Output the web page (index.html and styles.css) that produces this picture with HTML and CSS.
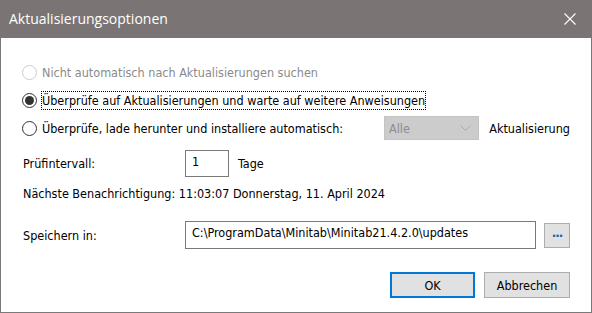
FILE: index.html
```html
<!DOCTYPE html>
<html lang="de">
<head>
<meta charset="utf-8">
<link rel="stylesheet" href="styles.css">
</head>
<body>
<div class="window">
  <div class="titlebar">
    <span class="title">Aktualisierungsoptionen</span>
    <svg class="close" width="12" height="12" viewBox="0 0 12 12"><path d="M0.5 0.5 L11.5 11.5 M11.5 0.5 L0.5 11.5" stroke="#fff" stroke-width="1.1" fill="none"/></svg>
  </div>
  <div class="content">
    <div class="row radio-row disabled">
      <span class="radio"></span>
      <span class="label">Nicht automatisch nach Aktualisierungen suchen</span>
    </div>
    <div class="row radio-row">
      <span class="radio checked"></span>
      <span class="label focus">Überprüfe auf Aktualisierungen und warte auf weitere Anweisungen</span>
    </div>
    <div class="row radio-row">
      <span class="radio"></span>
      <span class="label wide">Überprüfe, lade herunter und installiere automatisch:</span>
      <div class="combo"><span>Alle</span><svg width="11" height="6" viewBox="0 0 11 6"><path d="M0.5 0.5 L5.5 5.5 L10.5 0.5" stroke="#a8a8a8" fill="none"/></svg></div>
      <span class="after">Aktualisierung</span>
    </div>
    <div class="row field-row interval">
      <span class="flabel">Prüfintervall:</span>
      <div class="input small">1</div>
      <span class="after-small">Tage</span>
    </div>
    <div class="next">Nächste Benachrichtigung: 11:03:07 Donnerstag, 11. April 2024</div>
    <div class="row field-row path">
      <span class="flabel">Speichern in:</span>
      <div class="input large">C:\ProgramData\Minitab\Minitab21.4.2.0\updates</div>
      <button class="browse">...</button>
    </div>
    <div class="buttons">
      <button class="btn default">OK</button>
      <button class="btn">Abbrechen</button>
    </div>
  </div>
</div>
</body>
</html>
```
FILE: styles.css
```css
html, body {
  margin: 0;
  padding: 0;
  background: #fff;
}
.window {
  width: 592px;
  height: 313px;
  display: flex;
  flex-direction: column;
  font-family: "DejaVu Sans Condensed", "DejaVu Sans", sans-serif;
  font-stretch: condensed;
  font-size: 12.5px;
  color: #000;
}
.titlebar {
  height: 38px;
  flex: none;
  background: #7a7574;
  color: #fff;
  display: flex;
  align-items: center;
  justify-content: space-between;
  padding: 0 16px 0 9px;
  font-family: "Open Sans", sans-serif;
  font-stretch: normal;
  font-size: 14px;
}
.title {
  margin-top: -1px;
}
.close {
  display: block;
}
.content {
  flex: 1;
  border: 1px solid #7a7a7a;
  border-top: none;
  padding: 20px 21px 0 21px;
  display: flex;
  flex-direction: column;
}
.row {
  display: flex;
  align-items: center;
}
.radio-row {
  height: 28px;
}
.radio {
  width: 15px;
  height: 15px;
  border: 1px solid #333;
  border-radius: 50%;
  box-sizing: border-box;
  flex: none;
  display: flex;
  align-items: center;
  justify-content: center;
  margin-right: 4px;
  margin-left: 0;
}
.radio.checked::after {
  content: "";
  width: 9px;
  height: 9px;
  border-radius: 50%;
  background: #333;
}
.disabled .radio {
  border-color: #cccccc;
}
.disabled .label {
  color: #8a8a8a;
}
.label {
  padding: 1px 0;
  border: 1px solid transparent;
}
.label.focus {
  border: 1px dotted #000;
}
.label.wide {
  width: 340px;
  flex: none;
}
.combo {
  width: 98px;
  height: 24px;
  box-sizing: border-box;
  background: #cccccc;
  border: 1px solid #c4c4c4;
  display: flex;
  align-items: center;
  justify-content: space-between;
  padding: 0 7px 0 4px;
  color: #8d8d8d;
  margin-left: 1px;
}
.after {
  margin-left: 10px;
}
.field-row .flabel {
  width: 162px;
  flex: none;
  padding-left: 1px;
}
.interval {
  margin-top: 8px;
  height: 27px;
}
.input {
  box-sizing: border-box;
  border: 1px solid #7a7a7a;
  background: #fff;
  padding: 3px 6px;
  align-self: stretch;
}
.input.small {
  width: 44px;
}
.after-small {
  margin-left: 9px;
}
.next {
  margin-top: 8px;
  height: 18px;
  line-height: 18px;
  padding-left: 1px;
}
.path {
  margin-top: 18px;
  height: 28px;
}
.input.large {
  width: 352px;
}
.browse {
  margin-left: 8px;
  width: 26px;
  height: 25px;
  box-sizing: border-box;
  background: #e1e1e1;
  border: 1px solid #adadad;
  color: #1a5fb4;
  font-family: "DejaVu Sans", sans-serif;
  font-size: 12px;
  font-weight: bold;
  padding: 0 0 4px 0;
  letter-spacing: -1px;
}
.buttons {
  margin-top: 23px;
  display: flex;
  justify-content: flex-end;
  gap: 9px;
}
.btn {
  height: 26px;
  box-sizing: border-box;
  background: #e1e1e1;
  border: 1px solid #adadad;
  font-family: "DejaVu Sans Condensed", "DejaVu Sans", sans-serif;
  font-stretch: condensed;
  font-size: 12.5px;
  color: #000;
  padding: 0;
  width: 86px;
}
.btn.default {
  border: 2px solid #0078d7;
  width: 85px;
}
```
